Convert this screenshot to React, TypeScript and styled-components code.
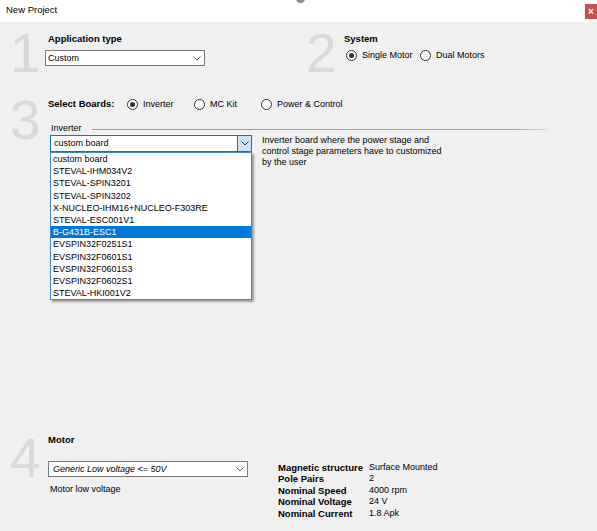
import React from "react";
import styled, { createGlobalStyle } from "styled-components";

const boards = [
  "custom board",
  "STEVAL-IHM034V2",
  "STEVAL-SPIN3201",
  "STEVAL-SPIN3202",
  "X-NUCLEO-IHM16+NUCLEO-F303RE",
  "STEVAL-ESC001V1",
  "B-G431B-ESC1",
  "EVSPIN32F0251S1",
  "EVSPIN32F0601S1",
  "EVSPIN32F0601S3",
  "EVSPIN32F0602S1",
  "STEVAL-HKI001V2",
];

const motorProps: [string, string][] = [
  ["Magnetic structure", "Surface Mounted"],
  ["Pole Pairs", "2"],
  ["Nominal Speed", "4000 rpm"],
  ["Nominal Voltage", "24 V"],
  ["Nominal Current", "1.8 Apk"],
];

function Chevron({ color = "#606060" }: { color?: string }) {
  return (
    <svg width="8" height="5" viewBox="0 0 8 5">
      <polyline points="0.5,0.5 4,4 7.5,0.5" fill="none" stroke={color} strokeWidth="1" />
    </svg>
  );
}

function Radio({ label, checked, width }: { label: string; checked?: boolean; width?: number }) {
  return (
    <RadioOption $width={width}>
      <RadioCircle $checked={!!checked} />
      {label}
    </RadioOption>
  );
}

export default function App() {
  return (
    <>
      <GlobalStyle />
      <Window>
        <TitleBar>
          <Title>New Project</Title>
          <CloseButton>×</CloseButton>
          <Spinner />
        </TitleBar>

        <Body>
          <TopRow>
            <Section $width={296}>
              <Digit>1</Digit>
              <Content $top={7}>
                <Label>Application type</Label>
                <Select $width={160} $top={5} $left={-3} $pad={2}>
                  <span>Custom</span>
                  <Chevron />
                </Select>
              </Content>
            </Section>
            <Section $grow>
              <Digit>2</Digit>
              <Content $top={7}>
                <Label>System</Label>
                <RadioRow $top={4}>
                  <Radio label="Single Motor" checked width={74} />
                  <Radio label="Dual Motors" />
                </RadioRow>
              </Content>
            </Section>
          </TopRow>

          <Section $gap={12}>
            <Digit>3</Digit>
            <Content $top={5}>
              <BoardsRow>
                <InlineLabel $width={79}>Select Boards:</InlineLabel>
                <Radio label="Inverter" checked width={67} />
                <Radio label="MC Kit" width={67} />
                <Radio label="Power &amp; Control" />
              </BoardsRow>

              <GroupHeader>
                <GroupTitle>Inverter</GroupTitle>
                <Rule $left={10} $right={50} />
              </GroupHeader>

              <ComboRow>
                <Combo>
                  <ComboText>custom board</ComboText>
                  <ComboButton>
                    <Chevron color="#333" />
                  </ComboButton>
                </Combo>
                <Description>
                  Inverter board where the power stage and
                  <br />
                  control stage parameters have to customized
                  <br />
                  by the user
                </Description>

                <DropList>
                  {boards.map((b) => (
                    <ListItem key={b} $selected={b === "B-G431B-ESC1"}>
                      {b}
                    </ListItem>
                  ))}
                </DropList>
              </ComboRow>
            </Content>
          </Section>

          <MotorSection>
            <Digit>4</Digit>
            <Content $top={3}>
              <Label>Motor</Label>
              <Rule $left={7} $right={55} $top={9} />
              <MotorRow>
                <MotorLeft>
                  <Select $width={200} $top={6} $pad={4}>
                    <Italic>Generic Low voltage &lt;= 50V</Italic>
                    <Chevron />
                  </Select>
                  <Caption>Motor low voltage</Caption>
                </MotorLeft>
                <PropsTable>
                  {motorProps.map(([k, v]) => (
                    <React.Fragment key={k}>
                      <PropLabel>{k}</PropLabel>
                      <PropValue>{v}</PropValue>
                    </React.Fragment>
                  ))}
                </PropsTable>
              </MotorRow>
            </Content>
          </MotorSection>
        </Body>
      </Window>
    </>
  );
}

const GlobalStyle = createGlobalStyle`
  html, body {
    margin: 0;
    padding: 0;
  }
  body {
    background: #f0f0f0;
    font-family: "Liberation Sans", Arial, sans-serif;
    font-size: 9px;
    color: #000;
  }
`;

const Window = styled.div`
  position: relative;
  width: 597px;
  height: 531px;
  display: flex;
  flex-direction: column;
  overflow: hidden;
  background: #f0f0f0;
`;

const TitleBar = styled.div`
  position: relative;
  flex: none;
  height: 22px;
  background: #fff;
  display: flex;
  align-items: flex-start;
  justify-content: space-between;
  padding-left: 6px;
`;

const Title = styled.span`
  margin-top: 4px;
  font-size: 9.5px;
  line-height: 12px;
`;

const CloseButton = styled.div`
  margin-top: 4px;
  width: 12px;
  height: 15px;
  background: #c75050;
  color: #fff;
  font-size: 10px;
  font-weight: bold;
  line-height: 15px;
  text-align: center;
`;

const Spinner = styled.div`
  position: absolute;
  top: -6px;
  left: 296px;
  width: 9px;
  height: 9px;
  border-radius: 50%;
  background: #8a8a8a;
`;

const Body = styled.div`
  flex: 1;
  display: flex;
  flex-direction: column;
  padding: 0 0 12px 10px;
`;

const TopRow = styled.div`
  display: flex;
  margin-top: 4px;
`;

const Section = styled.div<{ $width?: number; $gap?: number; $grow?: boolean }>`
  display: flex;
  align-items: flex-start;
  flex: ${(p) => (p.$grow ? "1" : "none")};
  ${(p) => (p.$width ? `width: ${p.$width}px;` : "")}
  margin-top: ${(p) => p.$gap ?? 0}px;
`;

const MotorSection = styled(Section)`
  margin-top: auto;
`;

const Digit = styled.div`
  flex: none;
  width: 38px;
  font-size: 55px;
  line-height: 55px;
  color: #d9d9d9;
`;

const Content = styled.div<{ $top: number }>`
  flex: 1;
  min-width: 0;
  display: flex;
  flex-direction: column;
  padding-top: ${(p) => p.$top}px;
`;

const Label = styled.div`
  font-weight: bold;
  font-size: 9.5px;
  line-height: 12px;
`;

const InlineLabel = styled(Label)<{ $width: number }>`
  width: ${(p) => p.$width}px;
  flex: none;
`;

const Select = styled.div<{ $width: number; $top: number; $left?: number; $pad: number }>`
  box-sizing: border-box;
  width: ${(p) => p.$width}px;
  height: 16px;
  margin-top: ${(p) => p.$top}px;
  margin-left: ${(p) => p.$left ?? 0}px;
  padding: 0 3px 0 ${(p) => p.$pad}px;
  border: 1px solid #7a7a7a;
  background: #fff;
  display: flex;
  align-items: center;
  justify-content: space-between;
  line-height: 14px;
`;

const Italic = styled.span`
  font-style: italic;
`;

const RadioRow = styled.div<{ $top: number }>`
  display: flex;
  align-items: center;
  height: 12px;
  margin-top: ${(p) => p.$top}px;
  padding-left: 2px;
`;

const BoardsRow = styled.div`
  display: flex;
  align-items: center;
  height: 12px;
`;

const RadioOption = styled.label<{ $width?: number }>`
  display: inline-flex;
  align-items: center;
  gap: 5px;
  line-height: 12px;
  ${(p) => (p.$width ? `width: ${p.$width}px;` : "")}
`;

const RadioCircle = styled.span<{ $checked: boolean }>`
  box-sizing: border-box;
  width: 11px;
  height: 11px;
  border: 1px solid #333;
  border-radius: 50%;
  background: #fff;
  display: flex;
  align-items: center;
  justify-content: center;

  &::after {
    content: "";
    width: 5px;
    height: 5px;
    border-radius: 50%;
    background: ${(p) => (p.$checked ? "#333" : "transparent")};
  }
`;

const GroupHeader = styled.div`
  display: flex;
  align-items: center;
  height: 12px;
  margin-top: 12px;
`;

const GroupTitle = styled.span`
  padding-left: 3px;
  line-height: 12px;
`;

const Rule = styled.div<{ $left: number; $right: number; $top?: number }>`
  flex: 1;
  height: 1px;
  margin: ${(p) => p.$top ?? 2}px ${(p) => p.$right}px 0 ${(p) => p.$left}px;
  background: linear-gradient(to right, #a0a0a0 0%, #a0a0a0 92%, #dadada 100%);
`;

const ComboRow = styled.div`
  position: relative;
  display: flex;
  align-items: flex-start;
  margin-top: 1px;
  padding-left: 2px;
`;

const Combo = styled.div`
  box-sizing: border-box;
  flex: none;
  width: 202px;
  height: 17px;
  border: 1px solid #0078d7;
  background: #fff;
  display: flex;
`;

const ComboText = styled.span`
  flex: 1;
  padding-left: 3px;
  line-height: 15px;
`;

const ComboButton = styled.span`
  width: 13px;
  border-left: 1px solid #0078d7;
  background: #cce4f7;
  display: flex;
  align-items: center;
  justify-content: center;
`;

const Description = styled.div`
  margin-left: 10px;
  line-height: 11px;
`;

const DropList = styled.div`
  position: absolute;
  top: 17px;
  left: 2px;
  z-index: 2;
  box-sizing: border-box;
  width: 202px;
  border: 1px solid #3d84d2;
  background: #fff;
  box-shadow: 2px 2px 2px rgba(0, 0, 0, 0.35);
`;

const ListItem = styled.div<{ $selected: boolean }>`
  height: 12.2px;
  line-height: 12.2px;
  padding-left: 2px;
  white-space: nowrap;
  background: ${(p) => (p.$selected ? "#0078d7" : "transparent")};
  color: ${(p) => (p.$selected ? "#fff" : "#000")};
`;

const MotorRow = styled.div`
  display: flex;
  align-items: flex-start;
  gap: 30px;
`;

const MotorLeft = styled.div`
  width: 200px;
  display: flex;
  flex-direction: column;
`;

const Caption = styled.div`
  margin-top: 6px;
  padding-left: 2px;
  line-height: 12px;
`;

const PropsTable = styled.div`
  display: grid;
  grid-template-columns: 91px auto;
  grid-auto-rows: 11.4px;
  line-height: 11.4px;
  margin-top: 7px;
`;

const PropLabel = styled.span`
  font-weight: bold;
  font-size: 9.5px;
`;

const PropValue = styled.span``;
